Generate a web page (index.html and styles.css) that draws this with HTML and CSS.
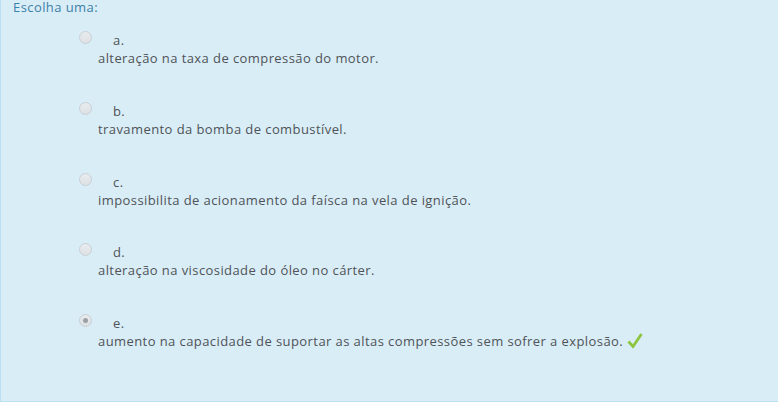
FILE: index.html
```html
<!DOCTYPE html>
<html>
<head>
<meta charset="utf-8">
<link rel="stylesheet" href="styles.css">
</head>
<body>
<div class="formulation">
  <div class="prompt">Escolha uma:</div>
  <div class="answer">
    <div class="option">
      <div class="choice"><span class="radio"></span><span class="letter">a.</span></div>
      <div class="text">alteração na taxa de compressão do motor.</div>
    </div>
    <div class="option">
      <div class="choice"><span class="radio"></span><span class="letter">b.</span></div>
      <div class="text">travamento da bomba de combustível.</div>
    </div>
    <div class="option">
      <div class="choice"><span class="radio"></span><span class="letter">c.</span></div>
      <div class="text">impossibilita de acionamento da faísca na vela de ignição.</div>
    </div>
    <div class="option">
      <div class="choice"><span class="radio"></span><span class="letter">d.</span></div>
      <div class="text">alteração na viscosidade do óleo no cárter.</div>
    </div>
    <div class="option">
      <div class="choice"><span class="radio checked"></span><span class="letter">e.</span></div>
      <div class="text">aumento na capacidade de suportar as altas compressões sem sofrer a explosão. <svg class="tick" width="16" height="17" viewBox="0 0 16 17"><path d="M1.5 9.5 L6 14.5 L14.5 2" fill="none" stroke="#8cc63f" stroke-width="2.8" stroke-linejoin="miter"/></svg></div>
    </div>
  </div>
</div>
</body>
</html>
```
FILE: styles.css
```css
html, body {
  margin: 0;
  padding: 0;
  background: #ffffff;
}
.formulation {
  box-sizing: border-box;
  width: 778px;
  height: 402px;
  background: #d9edf7;
  border-left: 1px solid #bce0f3;
  border-bottom: 1px solid #bce0f3;
  font-family: "Open Sans", sans-serif;
  font-size: 13px;
  letter-spacing: 0.42px;
  color: #4f5357;
  padding: 0 0 0 12px;
}
.prompt {
  color: #3d81a8;
  line-height: 14px;
}
.answer {
  padding-left: 66px;
  padding-top: 17px;
  display: flex;
  flex-direction: column;
  gap: 33.75px;
}
.option {
  display: flex;
  flex-direction: column;
}
.choice {
  display: flex;
  align-items: flex-start;
  height: 17px;
}
.radio {
  box-sizing: border-box;
  width: 13px;
  height: 13px;
  border-radius: 50%;
  border: 1px solid #c9cfd3;
  background: linear-gradient(#e9ecef, #dde1e4);
  position: relative;
  flex: none;
}
.radio.checked::after {
  content: "";
  position: absolute;
  left: 3px;
  top: 3px;
  width: 5px;
  height: 5px;
  border-radius: 50%;
  background: #9aa0a4;
}
.letter {
  margin-left: 21px;
  margin-top: 1px;
  line-height: 16px;
}
.text {
  padding-left: 19px;
  line-height: 20px;
}
.tick {
  vertical-align: -3px;
}
```
